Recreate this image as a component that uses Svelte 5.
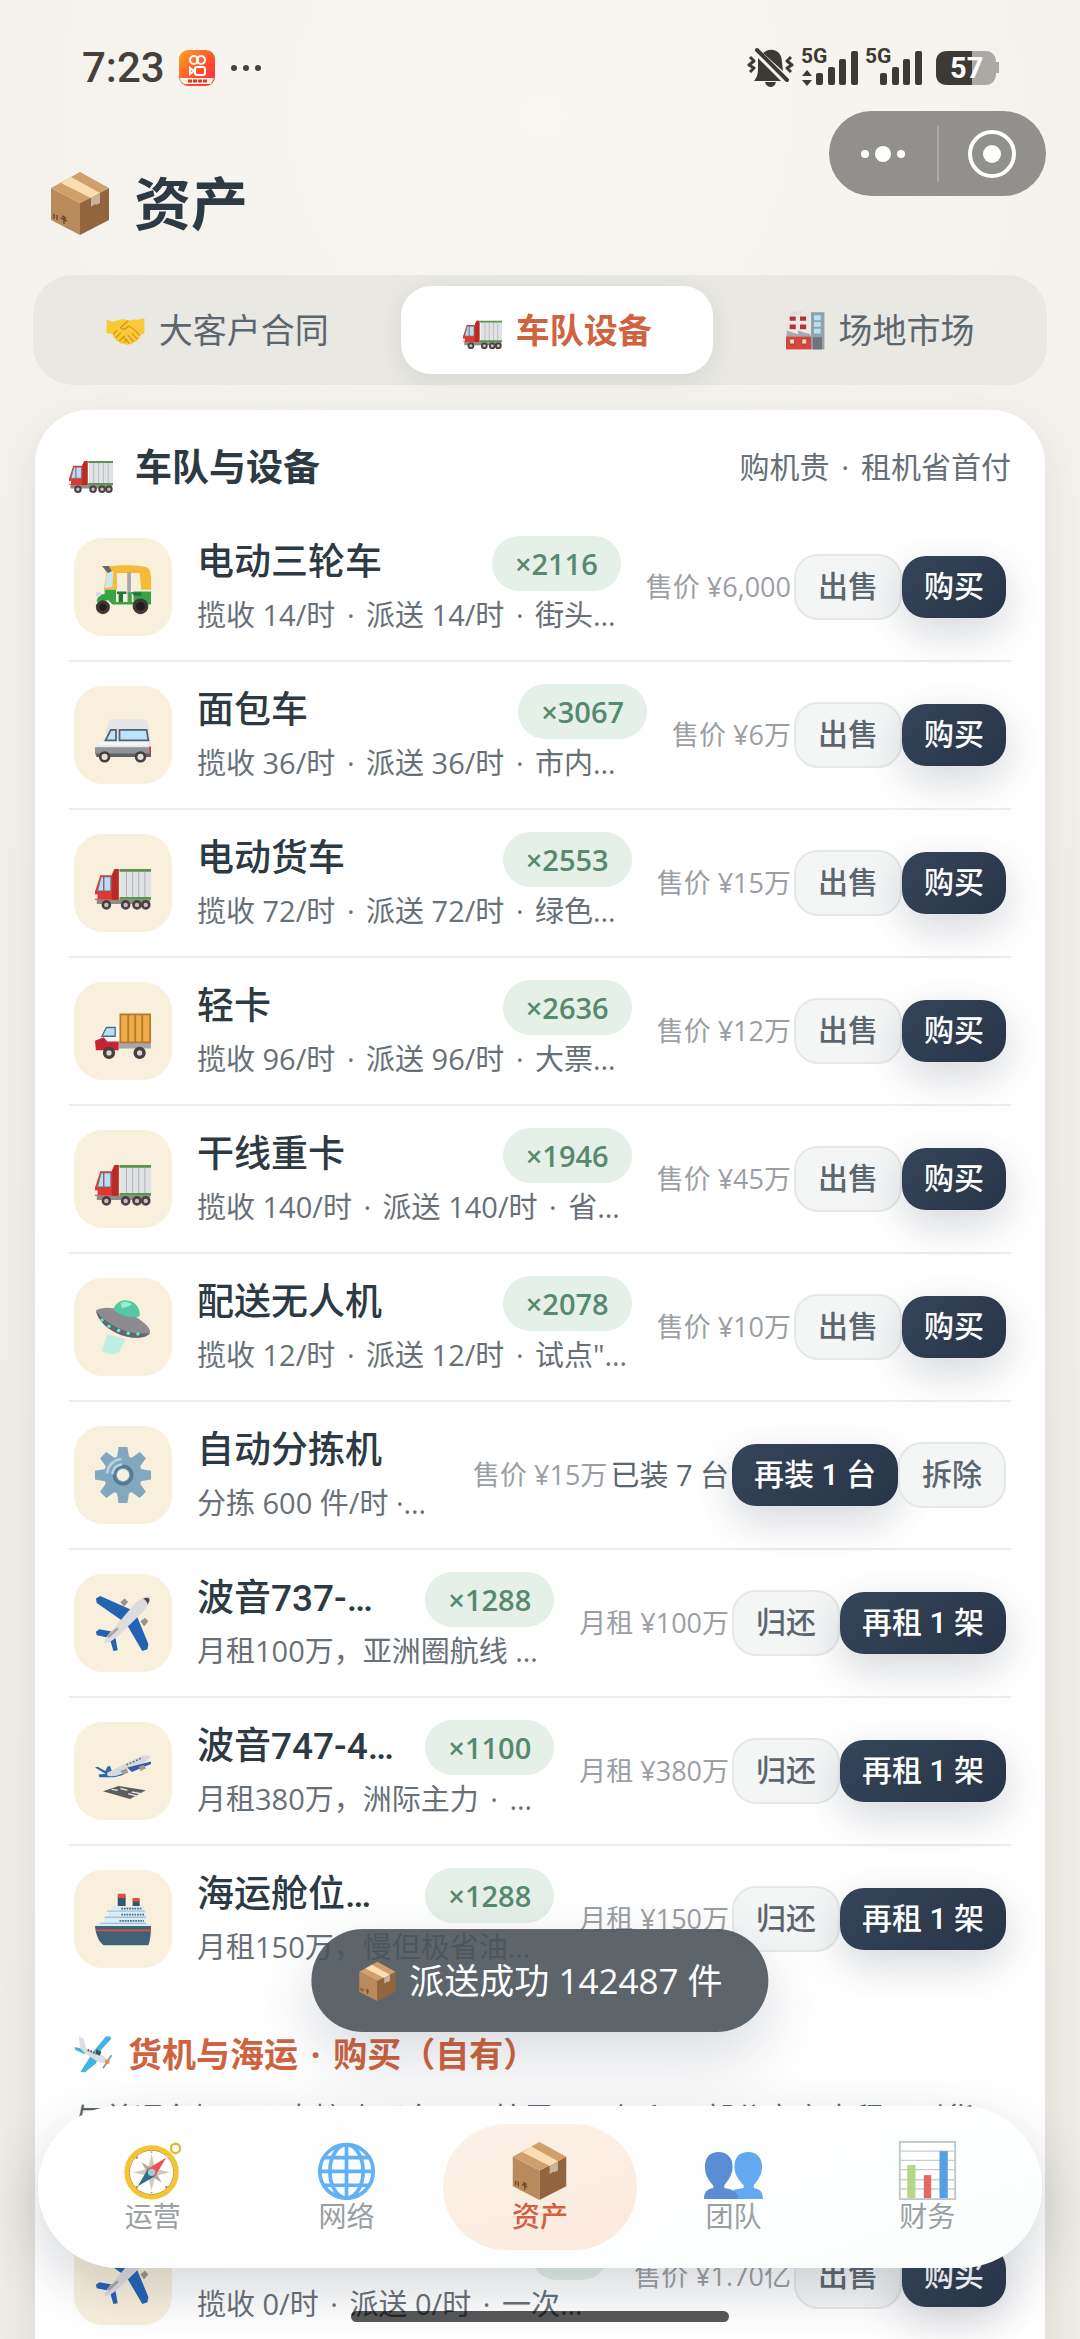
<script>
  const tabs = [
    { icon: 'handshake', label: '大客户合同' },
    { icon: 'truck', label: '车队设备' },
    { icon: 'factory', label: '场地市场' }
  ];
  let activeTab = $state(1);

  const sell = { text: '出售', kind: 'ghost' };
  const buy = { text: '购买', kind: 'primary' };
  const giveBack = { text: '归还', kind: 'ghost' };
  const rent = { text: '再租 1 架', kind: 'primary' };

  const fleet = [
    { icon: 'rickshaw', name: '电动三轮车', count: 2116, desc: '揽收 14/时 · 派送 14/时 · 街头…', price: '售价 ¥6,000', actions: [sell, buy] },
    { icon: 'van', name: '面包车', count: 3067, desc: '揽收 36/时 · 派送 36/时 · 市内…', price: '售价 ¥6万', actions: [sell, buy] },
    { icon: 'truck', name: '电动货车', count: 2553, desc: '揽收 72/时 · 派送 72/时 · 绿色…', price: '售价 ¥15万', actions: [sell, buy] },
    { icon: 'lorry', name: '轻卡', count: 2636, desc: '揽收 96/时 · 派送 96/时 · 大票…', price: '售价 ¥12万', actions: [sell, buy] },
    { icon: 'truck', name: '干线重卡', count: 1946, desc: '揽收 140/时 · 派送 140/时 · 省…', price: '售价 ¥45万', actions: [sell, buy] },
    { icon: 'ufo', name: '配送无人机', count: 2078, desc: '揽收 12/时 · 派送 12/时 · 试点"…', price: '售价 ¥10万', actions: [sell, buy] },
    {
      icon: 'gear',
      name: '自动分拣机',
      desc: '分拣 600 件/时 ·…',
      price: '售价 ¥15万',
      owned: '已装 7 台',
      actions: [
        { text: '再装 1 台', kind: 'primary' },
        { text: '拆除', kind: 'ghost' }
      ]
    },
    { icon: 'plane', name: '波音737-…', count: 1288, desc: '月租100万，亚洲圈航线 …', price: '月租 ¥100万', actions: [giveBack, rent] },
    { icon: 'takeoff', name: '波音747-4…', count: 1100, desc: '月租380万，洲际主力 · …', price: '月租 ¥380万', actions: [giveBack, rent] },
    { icon: 'ship', name: '海运舱位…', count: 1288, desc: '月租150万，慢但极省油…', price: '月租 ¥150万', actions: [giveBack, rent] }
  ];

  const owned = [
    { icon: 'plane', name: '波音737', count: 0, desc: '揽收 0/时 · 派送 0/时 · 一次…', price: '售价 ¥1.70亿', actions: [sell, buy] }
  ];

  const nav = [
    { icon: 'compass', label: '运营' },
    { icon: 'globe', label: '网络' },
    { icon: 'box', label: '资产' },
    { icon: 'people', label: '团队' },
    { icon: 'chart', label: '财务' }
  ];
  let activeNav = $state(2);
</script>

{#snippet icon(name)}
  <svg class="icon" viewBox="0 0 64 64" aria-hidden="true">
    {#if name === 'box'}
      <path fill="#b98a5c" d="M3 17 32 32v32L3 49z" />
      <path fill="#93653f" d="M61 17 32 32v32l29-15z" />
      <path fill="#cfa06b" d="M32 1 61 17 32 32 3 17z" />
      <path fill="#fbdfb0" d="m23 6-10 6 30 15 9-5z" />
      <path fill="#c9b29c" d="m43 27 9-5v10l-4 2-1-1-4 3z" />
      <path fill="none" stroke="#6d4a2c" stroke-width="1.5" d="M6 43v5m3-4v5m4-2 6 3m-5-5 4 2m-2 0v6" />
    {:else if name === 'truck'}
      <path fill="#8d8d86" d="M2 51h61v5H2z" />
      <path fill="#e1e2e5" d="M29 17h35v33H29z" />
      <path stroke="#a9abb0" d="M36 19v30m7-30v30m7-30v30m7-30v30" />
      <path fill="#5f9150" d="M28 16h36v3H28zM28 48h36v3H28z" />
      <path fill="#d83a31" d="M6 23h13l3-7h5v35H0V41l1-2z" />
      <path fill="#b92b25" d="M20 21l3-5h4v35h-8z" />
      <path fill="#bcdcf7" stroke="#6d7680" d="M7 25h11v16H3z" />
      <path stroke="#7e5b60" stroke-width="1.5" d="M10 25v16" />
      <path fill="#f6e8df" d="M0 45h3v5H0z" />
      <g fill="#c9c2bd" stroke="#4a4041" stroke-width="3">
        <circle cx="13" cy="57" r="4" /><circle cx="35" cy="57" r="4" /><circle cx="48" cy="57" r="4" /><circle cx="58" cy="57" r="4" />
      </g>
    {:else if name === 'handshake'}
      <path fill="#f9c935" d="M1 14c6 3 11 4 16 2l11-3 8 3 11-2c6 1 11 0 16-2v25l-8 3c2 4-1 7-4 6 0 4-3 6-6 4-1 4-4 6-7 4-4 3-7 1-9-1-4 2-7 0-7-3-4 0-6-2-6-5-4-1-6-4-4-7L1 36z" />
      <path fill="none" stroke="#d2941c" stroke-width="2" stroke-linecap="round" stroke-linejoin="round" d="M36 16 24 27c2 5 8 3 13-2 5 1 13 9 18 15M43 37l8 9M36 40l9 10M30 44l8 9M12 38l6-6m-2 12 8-8m-2 13 8-8m-1 11 5-5" />
    {:else if name === 'factory'}
      <path fill="#d9dcdf" opacity=".8" d="M6 8c1-6 7-7 10-7l13-1c-1 5-6 5-9 6l-8 3z" />
      <path fill="#f3eeee" d="M6 8h10v30H6zM23 8h10v30H23z" />
      <path fill="#ba2f40" d="M6 9h10v7H6zM6 22h10v8H6zM23 9h10v7H23zM23 22h10v8H23z" />
      <path fill="#a4abad" d="M1 32l19 6V32l20 6v8H1z" />
      <path fill="#d9453e" d="M0 42h41v21H0z" />
      <path fill="#f6dfb2" stroke="#7c2e2c" d="M6 46h8v8H6zM26 46h8v8h-8z" />
      <path fill="#93a1a9" d="M41 2h22v61H41z" />
      <path fill="#b7e3f4" d="M46 7h11v8H46zM46 18h11v8H46zM46 29h11v8H46z" />
      <path fill="#6c757a" d="M44 43h15v20H44z" />
    {:else if name === 'rickshaw'}
      <path fill="#f4bc36" d="M10 9c18-3 38-2 48 0 4 1 6 5 6 13v13H10l3-18z" />
      <path fill="#f7efdb" d="M25 16h12v23H25zM41 16h10l2 21H41z" />
      <path fill="#a6a7ab" d="M37 15h4v36h-4z" />
      <path fill="#c9e5f7" d="M14 14h7l-1 18-9 1z" />
      <path fill="#606872" d="M8 8l8 0 3 6-4 2z" />
      <path fill="#37a44a" d="M11 35h13v14h14V38h4v11h2V37h20v15H20l-5-5-13 2c0-5 4-9 9-9z" />
      <path fill="#207a35" d="M25 37h11v3h-4v9h-5v-9h-2zM41 38h12v4h-8z" />
      <circle cx="4" cy="40" r="3" fill="#dadde0" />
      <g fill="#1f1d1e" stroke="#43372f" stroke-width="4"><circle cx="9" cy="55" r="6" /><circle cx="52" cy="54" r="7" /></g>
    {:else if name === 'van'}
      <path fill="#e3e5e8" d="M15 18c0-3 2-4 5-4h34c4 0 6 2 7 6l3 28H0l4-7 8-6z" />
      <path fill="#f5f6f8" d="M5 39h56v5H3z" />
      <path fill="#919397" d="M0 46h64v7l-3 4H2l-2-4z" />
      <path fill="#5d6065" d="M1 53h63v4H2z" />
      <path fill="#bce3fb" stroke="#56616b" stroke-width="2" d="M18 26h6v12H12zM28 26h31l2 12H28z" />
      <path fill="#d33a42" d="M62 45h2v8h-2z" />
      <g fill="#e5dfd9" stroke="#463f3e" stroke-width="3"><circle cx="11" cy="57" r="5" /><circle cx="52" cy="57" r="5" /></g>
    {:else if name === 'lorry'}
      <path fill="#a3a8ad" d="M24 44h40v8H24z" />
      <path fill="#eead48" stroke="#b27a2a" stroke-width="2" d="M29 13h34v32H29z" />
      <path stroke="#b27a2a" stroke-width="2" d="M38 13v32m8-32v32m8-32v32" />
      <path fill="#f4f4f5" d="M10 27c1-2 3-2 5-2h12v29H1V41l5-3z" />
      <path fill="#c6242e" d="M0 43l10-4 4 5h13v10H1z" />
      <path fill="#b7e0f6" stroke="#56697a" stroke-width="1.5" d="M13 28h10v10H8z" />
      <g fill="#ded9d6" stroke="#47403f" stroke-width="4"><circle cx="16" cy="57" r="5" /><circle cx="51" cy="57" r="5" /></g>
    {:else if name === 'ufo'}
      <path fill="#aeeee6" opacity=".75" d="M14 40 8 59c6 5 15 5 20 1l7-14z" />
      <path fill="#8d8b90" d="M1 13c8-5 25-4 40 4 12 7 22 14 22 21-6 9-25 7-38 1C10 32 4 23 1 13z" />
      <path fill="#67666b" d="M1 14c14 17 38 28 62 25-7 8-25 6-38 0C10 32 4 23 1 14z" />
      <path fill="#52c8a3" d="M21 12C24 3 32 0 39 2c8 2 13 9 12 18-10 2-23-1-30-8z" />
      <path fill="#9bead0" d="M29 5c4-3 10-2 13 1-3 3-7 3-11 5z" />
      <g fill="#56f0dc"><circle cx="8" cy="24" r="2" /><circle cx="16" cy="31" r="2" /><circle cx="27" cy="36" r="2" /><circle cx="38" cy="39" r="2" /><circle cx="49" cy="40" r="2" /></g>
      <g fill="#fff"><circle cx="13" cy="4" r="1" /><circle cx="61" cy="15" r="1" /><circle cx="59" cy="48" r="1" /><circle cx="41" cy="51" r="1" /></g>
    {:else if name === 'gear'}
      <g fill="#82a8c0">
        <circle cx="32" cy="32" r="22" />
        {#each [0, 45, 90, 135] as angle}
          <path d="M27 0h10l2 12v40l-2 12H27l-2-12V12z" transform="rotate({angle} 32 32)" />
        {/each}
      </g>
      <circle cx="32" cy="32" r="10" fill="none" stroke="#547b94" stroke-width="4" />
      <path fill="none" stroke="#b5d3e2" stroke-width="3" stroke-linecap="round" d="M14 29c1-8 7-14 15-15M20 30c1-5 5-9 10-10" />
      <circle cx="32" cy="32" r="7" fill="#f8efdc" />
    {:else if name === 'plane'}
      <path fill="#9b948e" d="m29 8 5-4 4 4-5 5zM52 30l5-4 4 4-5 6z" />
      <path fill="#2463b4" d="M1 4l5-3 38 17-12 12L2 9zM47 22 36 33l18 31 6-2 1-6zM1 42l4-3 16 3-4 7-15-3zM23 47l-6 3 4 14 5-1z" />
      <path fill="#dcdbde" d="M63 1c2 6-4 13-8 18L26 47c-5 4-10 8-15 8 0-5 4-10 9-15L46 9c5-4 11-8 17-8z" />
      <path fill="#46464c" d="M55 4c5-2 8-1 7 3l-2 4c0-3-2-5-5-7z" />
      <path fill="none" stroke="#ada39d" stroke-width="3" d="m15 48 11-10" />
    {:else if name === 'takeoff'}
      <path fill="#2f66b0" d="M0 28l3-1 9 5 2-5 3-1 3 8 14 2-12 3H5l-1-3 8-1z" />
      <path fill="#d9d8de" d="M14 34 50 16c5-2 9-3 13-1 0 4-6 7-11 9L30 35c-6 3-12 4-16 2z" />
      <path fill="#325da5" d="m37 28 27-7v3l-22 9z" />
      <path fill="#9f9a97" d="m29 32 7-3 2 5-6 2zM50 27l6-2 2 4-6 3z" />
      <path stroke="#56585e" stroke-width="1.5" stroke-dasharray="2 2" d="m36 25 18-8" />
      <path fill="#5d5d60" d="m9 55 18-6 31 5-18 10z" />
      <path fill="none" stroke="#e0ded9" stroke-width="1.5" d="m19 53 7 1m3-2 8 2m1 4 11 3m-7-5 11 2" />
    {:else if name === 'ship'}
      <path fill="#36566a" d="M26 6h9v13h-9zM43 10h8v12h-8z" />
      <path fill="#df5146" d="M26 3h9v5h-9zM43 8h8v4h-8z" />
      <path fill="#dcecf5" d="M19 17h37v6H18zM16 23h42v7H15zM11 30h47v7H10zM2 37h61v4H1z" />
      <path stroke="#4a6e84" stroke-width="2" stroke-dasharray="2 1" d="M30 20h24M30 27h26M28 34h28" />
      <path stroke="#9fc3d6" stroke-width="1.5" d="M14 23h43M11 30h47M6 37h52" />
      <path fill="#426177" d="M0 40h64c0 9-1 17-3 22H10C4 58 1 50 0 40z" />
      <path fill="#e0503f" d="M1 44h63v2H1z" />
    {:else if name === 'prop'}
      <path fill="#42b5df" d="M54 2l8 1v4L46 25l-9 23-19 15-7-1 14-22 9-14zM1 20l18 4 4 5-6 3L2 25z" />
      <path fill="#d9dfe4" d="M8 2l8 4 5 17 25 10c6 3 10 8 11 13-6 2-13 1-18-2L20 32 10 22z" />
      <path stroke="#4d5960" stroke-width="3" stroke-dasharray="3 2" d="m23 25 15 7" />
      <path fill="#364f62" d="M38 24l8 5-3 6-7-4z" />
      <path stroke="#8899a6" stroke-width="3" d="M49 56 63 34" />
      <circle cx="56" cy="45" r="4" fill="#e88e42" />
    {:else if name === 'compass'}
      <circle cx="57" cy="8" r="5" fill="none" stroke="#e3b934" stroke-width="2.5" />
      <circle cx="31" cy="34" r="27" fill="#fff" stroke="#f3c52e" stroke-width="5" />
      <circle cx="31" cy="34" r="24" fill="none" stroke="#c88f20" stroke-width="1" />
      <path fill="#d3c8c0" d="m31 14 4 16 16 4-16 4-4 16-4-16-16-4 16-4z" />
      <path fill="#b9aa98" d="m20 23 14 8 8 14-14-8z" />
      <path fill="#ec5353" d="M47 18 35 38l-8-8z" />
      <path fill="#356f80" d="M16 49l11-19 8 8z" />
      <circle cx="31" cy="34" r="4" fill="#9ecbd5" />
      <g fill="#b09a70"><circle cx="15" cy="18" r="1.5" /><circle cx="47" cy="50" r="1.5" /><circle cx="15" cy="50" r="1.5" /><circle cx="31" cy="12" r="1" /><circle cx="31" cy="56" r="1" /></g>
    {:else if name === 'globe'}
      <circle cx="32" cy="33" r="29" fill="#f8fcff" stroke="#62b1f4" stroke-width="4" />
      <path fill="none" stroke="#62b1f4" stroke-width="4" d="M32 4v58M3 33h58M8 18h48M8 48h48" />
      <ellipse cx="32" cy="33" rx="18" ry="29" fill="none" stroke="#62b1f4" stroke-width="4" />
    {:else if name === 'people'}
      <path fill="#62a9ef" d="M33 28c0-11 6-16 15-16s15 6 15 16c0 9-5 15-9 20v3c6 1 10 4 10 12H34l-2-10 11-2v-3c-5-5-10-11-10-20z" />
      <path fill="#5b8dd5" d="M1 28c0-11 6-16 15-16s15 6 15 16c0 9-5 15-9 20v3c8 1 15 4 15 12H0c0-8 4-11 10-12v-3C5 43 1 37 1 28z" />
    {:else if name === 'chart'}
      <path fill="#fff" stroke="#bfc5cc" stroke-width="2" d="M2 1h60v62H2z" />
      <path stroke="#c8cdd3" stroke-width="1.5" d="M2 11h60M2 21h60M2 31h60M2 42h60M2 52h60" />
      <path fill="#b7d686" d="M10 26h9v36h-9z" />
      <path fill="#e26a61" d="M28 37h8v25h-8z" />
      <path fill="#559fe4" d="M45 11h9v51h-9z" />
    {/if}
  </svg>
{/snippet}

<!-- Text whose middle dots get a little air on both sides -->
{#snippet dotted(text)}
  <span>{#each text.split(' · ') as part, i}{#if i > 0}<span class="dot">{' · '}</span>{/if}{part}{/each}</span>
{/snippet}

{#snippet assetRow(item)}
  <li class="row">
    <div class="tile">{@render icon(item.icon)}</div>
    <div class="info">
      <div class="name-line">
        <span class="name">{item.name}</span>
        {#if item.count !== undefined}
          <span class="badge">×{item.count}</span>
        {/if}
      </div>
      <div class="desc">{@render dotted(item.desc)}</div>
    </div>
    <div class="actions">
      <span class="price">{item.price}</span>
      {#if item.owned}
        <span class="owned">{item.owned}</span>
      {/if}
      {#each item.actions as action}
        <button class="btn {action.kind}">{action.text}</button>
      {/each}
    </div>
  </li>
{/snippet}

<div class="screen">
  <!-- Status bar -->
  <div class="status">
    <span class="time">7:23</span>
    <svg class="app-logo" viewBox="0 0 36 36" aria-hidden="true">
      <defs>
        <linearGradient id="logo-bg" x1="0" y1="0" x2="1" y2="1">
          <stop offset="0" stop-color="#ffa424" />
          <stop offset=".6" stop-color="#ff4d2e" />
          <stop offset="1" stop-color="#fb2a4c" />
        </linearGradient>
      </defs>
      <rect width="36" height="36" rx="9" fill="url(#logo-bg)" />
      <g fill="none" stroke="#fff" stroke-width="2">
        <circle cx="15" cy="10" r="4" />
        <circle cx="22" cy="10" r="4" />
        <rect x="16" y="17" width="10" height="8" rx="2" />
        <path d="m11 18 4 3-4 3z" />
      </g>
      <path fill="#fff3e4" d="M1 28h34l-3 6H5c-3-2-4-4-4-6z" />
      <path stroke="#e8302c" stroke-width="3" stroke-dasharray="4 1" d="M9 31h20" />
    </svg>
    <svg class="more" viewBox="0 0 30 6" aria-hidden="true">
      <g fill="#45403b"><circle cx="3" cy="3" r="3" /><circle cx="15" cy="3" r="3" /><circle cx="27" cy="3" r="3" /></g>
    </svg>
    <svg class="signals" viewBox="0 -10 254 64" role="img" aria-label="5G 57%">
      <g fill="#3d3935">
        <path d="M12 12l23 23H8c4-5 4-9 4-14zM20 5c9-4 16 2 16 11l1 9L17 7z" />
        <path d="M19 36h11c-1 4-4 5-5 5-2 0-5-1-6-5z" />
        <path fill="none" stroke="#3d3935" stroke-width="4" stroke-linecap="round" d="m11 4 30 30" />
        <path fill="none" stroke="#3d3935" stroke-width="3" stroke-linejoin="round" d="m4 11 4 4-5 4 5 3-4 4M45 11l-4 4 5 4-5 3 4 4" />
        <text x="55" y="17">5G</text>
        <path d="m61 24 5 6h-10zM61 40l5-6h-10z" />
        <rect x="70" y="27" width="7" height="12" rx="2" />
        <rect x="82" y="21" width="7" height="18" rx="2" />
        <rect x="93" y="13" width="7" height="26" rx="2" />
        <rect x="105" y="5" width="7" height="34" rx="2" />
        <text x="119" y="17">5G</text>
        <rect x="134" y="27" width="7" height="12" rx="2" />
        <rect x="146" y="21" width="7" height="18" rx="2" />
        <rect x="157" y="13" width="7" height="26" rx="2" />
        <rect x="169" y="5" width="7" height="34" rx="2" />
        <path fill="#aaa9a6" d="M226 5h13c7 0 11 4 11 11h3v11h-3c0 8-4 12-11 12h-13z" />
        <path d="M226 5h-25c-7 0-11 4-11 11v12c0 7 4 11 11 11h25z" />
        <text class="level" x="204" y="32">57</text>
      </g>
    </svg>
  </div>

  <!-- Page title and mini program capsule -->
  <header class="header">
    <h1>{@render icon('box')}资产</h1>
    <div class="capsule">
      <button aria-label="更多">
        <svg viewBox="0 0 46 18"><g fill="#fff"><circle cx="5" cy="9" r="4" /><circle cx="23" cy="9" r="8" /><circle cx="41" cy="9" r="4" /></g></svg>
      </button>
      <button aria-label="关闭">
        <svg viewBox="0 0 48 48"><circle cx="24" cy="24" r="22" fill="none" stroke="#fff" stroke-width="4" /><circle cx="24" cy="24" r="9" fill="#fff" /></svg>
      </button>
    </div>
  </header>

  <div class="tabs" role="tablist">
    {#each tabs as tab, i}
      <button class="tab" class:active={activeTab === i} role="tab" aria-selected={activeTab === i} onclick={() => (activeTab = i)}>
        {@render icon(tab.icon)}{tab.label}
      </button>
    {/each}
  </div>

  <main class="card">
    <div class="card-head">
      <h2>{@render icon('truck')}车队与设备</h2>
      <div class="hint">{@render dotted('购机贵 · 租机省首付')}</div>
    </div>
    <ul class="list">
      {#each fleet as item}
        {@render assetRow(item)}
      {/each}
    </ul>
    <h3>{@render icon('prop')}{@render dotted('货机与海运 · 购买（自有）')}</h3>
    <p class="note">与普通车辆，可直接购买自用，按需不可加租，部分大户中程可到货</p>
    <ul class="list">
      {#each owned as item}
        {@render assetRow(item)}
      {/each}
    </ul>
  </main>

  <div class="toast" role="status">{@render icon('box')}派送成功 142487 件</div>

  <nav class="nav">
    {#each nav as item, i}
      <button class="nav-item" class:active={activeNav === i} onclick={() => (activeNav = i)}>
        {@render icon(item.icon)}
        <span>{item.label}</span>
      </button>
    {/each}
  </nav>
  <div class="home-bar"></div>
</div>

<style>
  :global(body) {
    margin: 0;
    background: #f2efe9;
  }

  .screen {
    position: relative;
    display: flex;
    flex-direction: column;
    height: 100vh;
    overflow: hidden;
    background: radial-gradient(circle at 50% 5%, #f8f6f1 0%, #f3f0ea 40%, #efece5 100%);
    color: #2d3a43;
    font-family: "Open Sans", "Noto Sans CJK SC", sans-serif;
  }

  button {
    margin: 0;
    padding: 0;
    border: none;
    background: none;
    font-family: inherit;
    color: inherit;
    white-space: nowrap;
    cursor: pointer;
  }

  h1,
  h2,
  h3,
  p,
  ul {
    margin: 0;
    padding: 0;
  }

  .icon {
    display: block;
    flex: none;
  }

  .dot {
    margin: 0 4px;
  }

  /* Status bar */
  .status {
    display: flex;
    align-items: center;
    flex: none;
    height: 64px;
    padding: 36px 80px 11px 82px;
    font-family: Roboto, sans-serif;
    color: #45403b;
  }

  .time {
    font-size: 42px;
    line-height: 48px;
    font-weight: 500;
  }

  .app-logo {
    width: 36px;
    height: 36px;
    margin-left: 14px;
  }

  .more {
    width: 30px;
    height: 6px;
    margin-left: 16px;
  }

  .signals {
    width: 254px;
    height: 64px;
    margin-left: auto;
  }

  .signals text {
    font-size: 21px;
    font-weight: 700;
  }

  .signals .level {
    font-size: 29px;
    fill: #fff;
  }

  /* Header */
  .header {
    display: flex;
    align-items: flex-start;
    justify-content: space-between;
    flex: none;
    height: 164px;
    padding: 0 34px 0 48px;
  }

  h1 {
    display: flex;
    align-items: center;
    gap: 22px;
    padding-top: 56px;
    font-size: 57px;
    line-height: 72px;
    font-weight: 700;
  }

  h1 .icon {
    width: 64px;
    height: 64px;
  }

  .capsule {
    display: flex;
    align-items: center;
    width: 217px;
    height: 85px;
    border-radius: 43px;
    background: #92908c;
  }

  .capsule button {
    display: flex;
    align-items: center;
    justify-content: center;
    flex: 1;
    height: 56px;
  }

  .capsule button + button {
    border-left: 2px solid #aaa8a5;
  }

  .capsule button:first-child svg {
    width: 46px;
    height: 18px;
  }

  .capsule button:last-child svg {
    width: 48px;
    height: 48px;
  }

  /* Tabs */
  .tabs {
    display: grid;
    grid-template-columns: 10fr 9fr 9fr;
    gap: 11px;
    flex: none;
    margin: 0 33px;
    padding: 11px;
    border-radius: 40px;
    background: #e9e8e3;
  }

  .tab {
    display: flex;
    align-items: center;
    justify-content: center;
    gap: 14px;
    height: 88px;
    border-radius: 30px;
    font-size: 34px;
    line-height: 48px;
    color: #5c666e;
  }

  .tab .icon {
    width: 39px;
    height: 39px;
  }

  .tab.active {
    background: #fff;
    color: #cf633f;
    font-weight: 700;
    box-shadow: 0 6px 24px rgba(45, 58, 67, 0.1);
  }

  /* Card */
  .card {
    flex: 1 0 auto;
    margin: 25px 35px 0;
    padding: 30px 34px 160px;
    border-radius: 54px 54px 0 0;
    background: #fff;
    box-shadow: 0 12px 48px rgba(45, 58, 67, 0.1);
  }

  .card-head {
    display: flex;
    align-items: center;
    justify-content: space-between;
    height: 54px;
    margin-bottom: 20px;
  }

  h2 {
    display: flex;
    align-items: flex-end;
    gap: 22px;
    font-size: 37px;
    line-height: 54px;
    font-weight: 700;
  }

  h2 .icon {
    width: 44px;
    height: 44px;
  }

  .hint {
    font-size: 30px;
    line-height: 48px;
    color: #666f76;
  }

  .list {
    list-style: none;
  }

  .row {
    display: flex;
    align-items: center;
    height: 146px;
    padding: 0 5px;
    border-bottom: 2px solid #eceeee;
  }

  .row:last-child {
    border-bottom-color: transparent;
  }

  .tile {
    display: flex;
    align-items: center;
    justify-content: center;
    flex: none;
    width: 98px;
    height: 98px;
    margin-right: 25px;
    border-radius: 29px;
    background: #f8efdc;
  }

  .tile .icon {
    width: 56px;
    height: 56px;
  }

  .info {
    flex: 1;
    min-width: 0;
    white-space: nowrap;
  }

  .name-line {
    display: flex;
    align-items: center;
    justify-content: space-between;
    height: 56px;
  }

  .name {
    font-family: Roboto, "Noto Sans CJK SC", sans-serif;
    font-size: 37px;
    line-height: 54px;
    font-weight: 500;
  }

  .badge {
    padding: 0 23px;
    border-radius: 28px;
    background: #e5f0e9;
    color: #57896f;
    font-size: 29px;
    line-height: 55px;
    font-weight: 600;
  }

  .desc {
    font-size: 29px;
    line-height: 48px;
    color: #687077;
  }

  .actions {
    display: flex;
    align-items: center;
    flex: none;
    margin-left: 25px;
    white-space: nowrap;
  }

  .price {
    padding-right: 3px;
    font-size: 27px;
    line-height: 48px;
    color: #9b9fa4;
  }

  .owned {
    padding-right: 3px;
    font-size: 29px;
    line-height: 48px;
    color: #5c666e;
  }

  .btn {
    padding: 0 22px;
    border-radius: 24px;
    font-family: Roboto, "Noto Sans CJK SC", sans-serif;
    font-size: 30px;
    line-height: 62px;
    font-weight: 500;
  }

  .ghost {
    border: 2px solid #e6e8e8;
    background: #f4f6f6;
    color: #5c666e;
  }

  .primary {
    background: linear-gradient(135deg, #35455a, #293447);
    color: #fff;
    box-shadow: 0 14px 44px rgba(41, 52, 71, 0.2);
  }

  h3 {
    display: flex;
    align-items: center;
    gap: 16px;
    padding: 35px 5px 17px;
    font-size: 34px;
    line-height: 50px;
    font-weight: 700;
    color: #cf633f;
  }

  h3 .icon {
    width: 38px;
    height: 38px;
  }

  .note {
    height: 107px;
    padding: 0 5px;
    overflow: hidden;
    font-size: 30px;
    line-height: 44px;
    color: #5c666e;
  }

  /* Overlays */
  .toast {
    position: absolute;
    left: 50%;
    bottom: 307px;
    display: flex;
    align-items: center;
    gap: 12px;
    padding: 0 46px;
    border-radius: 52px;
    background: rgba(73, 82, 89, 0.89);
    color: #fff;
    font-size: 35px;
    line-height: 103px;
    white-space: nowrap;
    transform: translateX(-50%);
    box-shadow: 0 24px 64px rgba(41, 52, 71, 0.18);
  }

  .toast .icon {
    width: 40px;
    height: 40px;
  }

  .nav {
    position: absolute;
    right: 38px;
    bottom: 71px;
    left: 38px;
    display: flex;
    padding: 18px;
    border-radius: 81px;
    background: linear-gradient(160deg, #fff, #fcfdfd);
    box-shadow: 0 20px 60px rgba(41, 52, 71, 0.2);
  }

  .nav-item {
    display: flex;
    flex: 1;
    flex-direction: column;
    align-items: center;
    padding: 17px 0 18px;
    border-radius: 63px;
    font-size: 28px;
    line-height: 32px;
    color: #9a9fa3;
  }

  .nav-item .icon {
    width: 59px;
    height: 59px;
  }

  .nav-item.active {
    background: linear-gradient(160deg, #fcf2e8, #fbe9dd);
    color: #d0603e;
    font-weight: 500;
  }

  .home-bar {
    position: absolute;
    bottom: 17px;
    left: 50%;
    width: 35%;
    height: 11px;
    border-radius: 6px;
    background: rgba(0, 0, 0, 0.66);
    transform: translateX(-50%);
  }
</style>
